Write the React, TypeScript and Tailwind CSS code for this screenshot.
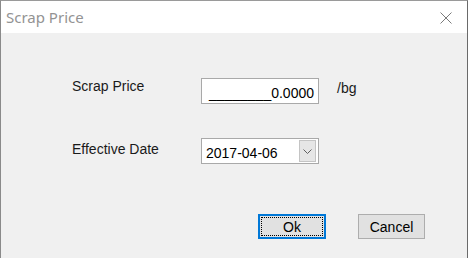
import React from "react";

export default function App() {
  const sans = { fontFamily: '"Liberation Sans", Arial, sans-serif' };
  return (
    <div className="w-[468px] h-[258px] overflow-hidden border-l border-t border-r border-l-[#8a8a8a] border-t-[#9a9a9a] border-r-[#6a6a6a] flex flex-col bg-[#f0f0f0]">
      <div className="h-[32px] bg-white flex items-center justify-between pl-[5px] pr-[15px] shrink-0">
        <span
          className="text-[15px] text-[#939393] leading-none"
          style={{ fontFamily: '"Noto Sans", "Open Sans", sans-serif' }}
        >
          Scrap Price
        </span>
        <svg width="12" height="12" viewBox="0 0 12 12" className="mt-[1px]">
          <path d="M0.5 0.5 L11.5 11.5 M11.5 0.5 L0.5 11.5" stroke="#7a7a7a" strokeWidth="1" />
        </svg>
      </div>
      <div className="flex-1 flex flex-col pl-[71px] pt-[45px]" style={sans}>
        <div className="flex items-start h-[26px]">
          <div className="w-[129px] text-[14px] leading-[16px] text-[#1a1a1a]">Scrap Price</div>
          <div className="w-[118px] h-[26px] bg-white border border-[#a9a9a9] flex items-center justify-end pr-[4px] text-[14px] leading-[16px] text-black pt-[3px]">
            ________0.0000
          </div>
          <div className="ml-[18px] mt-[2px] text-[14px] leading-[16px] text-[#1a1a1a]">/bg</div>
        </div>
        <div className="flex items-start h-[26px] mt-[34px]">
          <div className="w-[129px] text-[14px] leading-[16px] text-[#1a1a1a] mt-[3px]">Effective Date</div>
          <div className="w-[118px] h-[26px] bg-white border border-[#a9a9a9] flex items-center justify-between pl-[4px] pr-[2px]">
            <span className="text-[14px] leading-[16px] text-black pt-[4px]">2017-04-06</span>
            <div className="w-[17px] h-[22px] bg-[#e6e6e6] border border-[#c4c4c4] flex items-center justify-center">
              <svg width="9" height="5" viewBox="0 0 9 5">
                <path d="M0.5 0.5 L4.5 4.5 L8.5 0.5" stroke="#606060" strokeWidth="1" fill="none" />
              </svg>
            </div>
          </div>
        </div>
        <div className="flex mt-[50px] pl-[186px]">
          <div className="w-[68px] h-[25px] border-2 border-[#0078d7] bg-[#e1e1e1] p-[1px]">
            <div className="w-full h-full border border-dotted border-black flex items-center justify-center text-[14px] leading-[16px] text-black">
              Ok
            </div>
          </div>
          <div className="ml-[32px] w-[67px] h-[25px] border border-[#adadad] bg-[#e1e1e1] flex items-center justify-center text-[14px] leading-[16px] text-black">
            Cancel
          </div>
        </div>
      </div>
    </div>
  );
}
